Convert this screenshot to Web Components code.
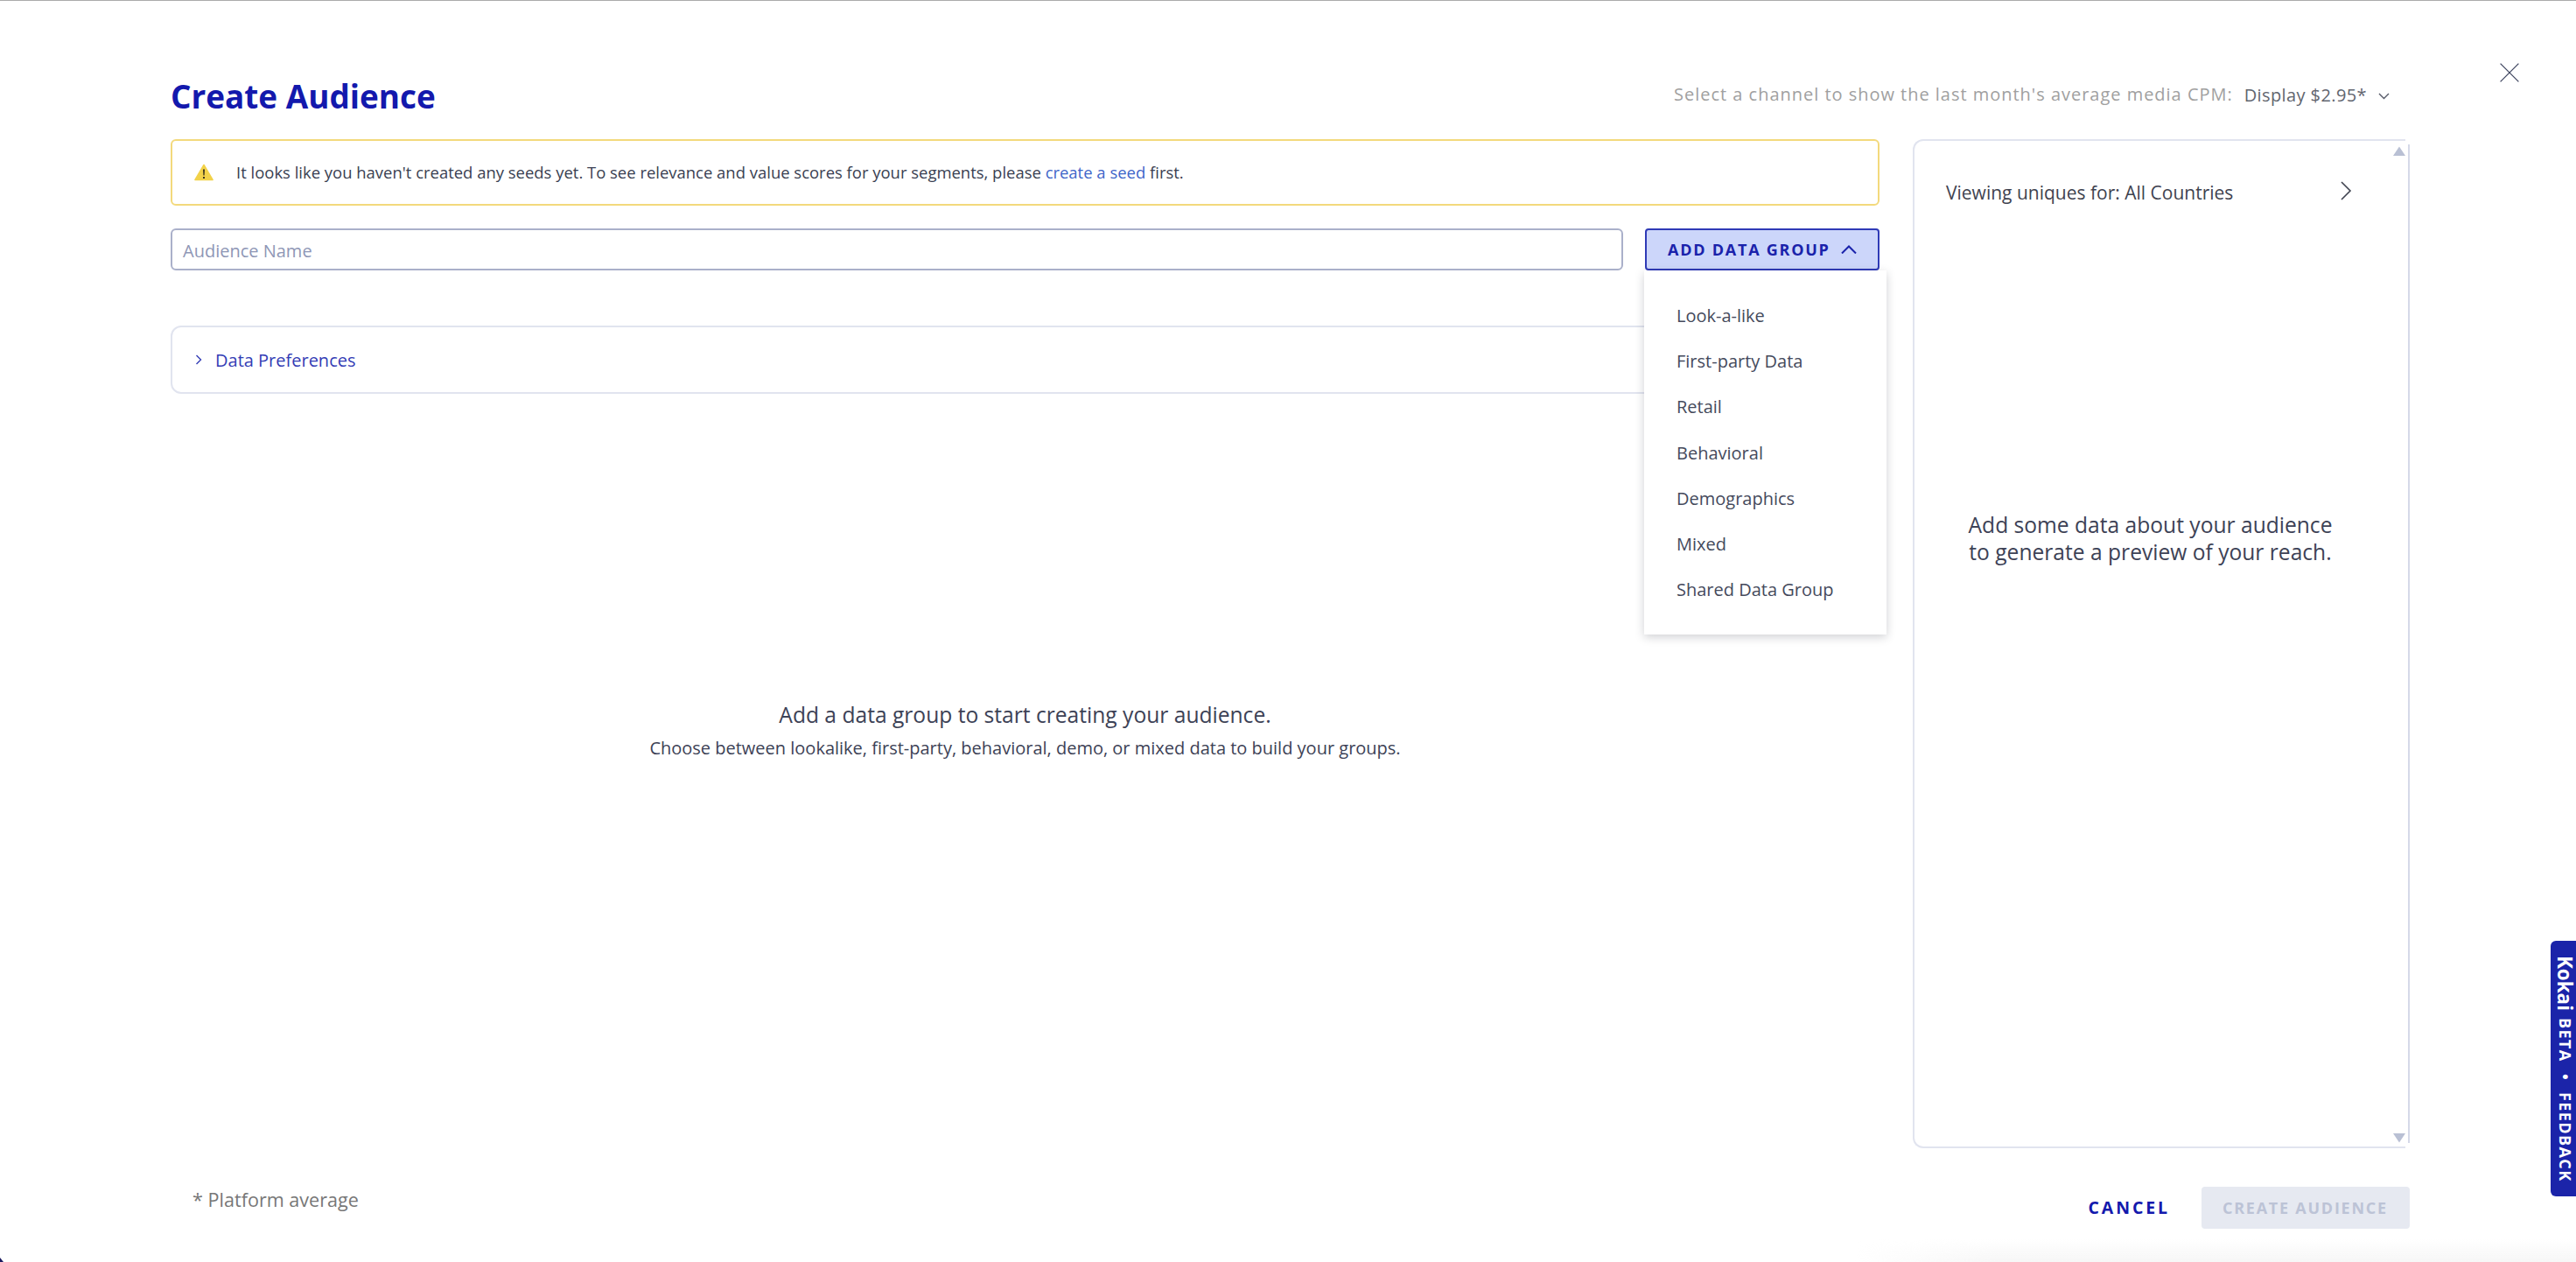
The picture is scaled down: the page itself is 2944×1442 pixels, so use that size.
<!DOCTYPE html>
<html>
<head>
<meta charset="utf-8">
<title>Create Audience</title>
<style>
    html, body { margin: 0; background: #fff; }
    body { font-family: "Open Sans", "Liberation Sans", sans-serif; color: #3a3f52; }
</style>
</head>
<body>
<audience-page>
    <audience-header slot="header" title-text="Create Audience" channel="Display $2.95*">Select a channel to show the last month's average media CPM:</audience-header>
    <alert-banner slot="main">It looks like you haven't created any seeds yet. To see relevance and value scores for your segments, please <a href="#">create a seed</a> first.</alert-banner>
    <name-row slot="main">
        <text-field slot="field">Audience Name</text-field>
        <data-group-button slot="action" label="ADD DATA GROUP">
            <menu-item>Look-a-like</menu-item>
            <menu-item>First-party Data</menu-item>
            <menu-item>Retail</menu-item>
            <menu-item>Behavioral</menu-item>
            <menu-item>Demographics</menu-item>
            <menu-item>Mixed</menu-item>
            <menu-item>Shared Data Group</menu-item>
        </data-group-button>
    </name-row>
    <collapse-card slot="main">Data Preferences</collapse-card>
    <empty-state slot="main" heading="Add a data group to start creating your audience.">Choose between lookalike, first-party, behavioral, demo, or mixed data to build your groups.</empty-state>
    <reach-panel slot="side" heading="Viewing uniques for: All Countries">Add some data about your audience<br>to generate a preview of your reach.</reach-panel>
    <audience-footer slot="footer" note="* Platform average"></audience-footer>
</audience-page>
<feedback-tab></feedback-tab>

<script>
class AudiencePage extends HTMLElement {
    constructor() {
        super();
        this.attachShadow({ mode: 'open' });
        this.shadowRoot.innerHTML = `
            <style>
                :host {
                    display: block;
                    box-sizing: border-box;
                    height: 1442px;
                    overflow: hidden;
                    position: relative;
                    border-top: 1px solid #ababab;
                    padding: 0 190px 0 195px;
                }
                .content {
                    display: grid;
                    grid-template-columns: 1953px 568px;
                    column-gap: 38px;
                    height: 1153px;
                }
                .main { display: flex; flex-direction: column; min-width: 0; }
                .close {
                    position: absolute;
                    left: 2857px;
                    top: 71px;
                    width: 22px;
                    height: 22px;
                }
                .fade {
                    position: absolute;
                    left: 2120px;
                    right: 0;
                    bottom: 0;
                    height: 26px;
                    background: linear-gradient(180deg, rgba(240,240,240,0), rgba(240,240,240,.55));
                    -webkit-mask-image: linear-gradient(90deg, transparent, #000 160px);
                }
                .corner {
                    position: absolute;
                    left: 0;
                    bottom: 0;
                    width: 4px;
                    height: 5px;
                    background: #1b1a5e;
                    clip-path: polygon(0 0, 100% 100%, 0 100%);
                }
            </style>
            <slot name="header"></slot>
            <div class="content">
                <div class="main"><slot name="main"></slot></div>
                <slot name="side"></slot>
            </div>
            <slot name="footer"></slot>
            <svg class="close" viewBox="0 0 22 22" fill="none" stroke="#3f4660" stroke-width="1.3">
                <path d="M.6.6l20.8 20.8M21.4.6L.6 21.4"/>
            </svg>
            <div class="fade"></div>
            <div class="corner"></div>
        `;
    }
}

class AudienceHeader extends HTMLElement {
    constructor() {
        super();
        this.attachShadow({ mode: 'open' });
        this.shadowRoot.innerHTML = `
            <style>
                :host {
                    display: flex;
                    justify-content: space-between;
                    align-items: flex-start;
                    height: 158px;
                    padding-right: 23px;
                }
                h1 {
                    margin: 84px 0 0;
                    font-size: 36.9px;
                    line-height: 50px;
                    font-weight: 700;
                    color: #1319ad;
                }
                .channel {
                    display: flex;
                    align-items: flex-start;
                    margin-top: 93px;
                    font-size: 20px;
                    line-height: 28px;
                    letter-spacing: .98px;
                    color: #a0a0a0;
                }
                .value {
                    margin: 1px 0 0 13px;
                    letter-spacing: .4px;
                    color: #62666f;
                }
                svg { width: 13px; height: 8px; margin: 12px 0 0 13px; }
            </style>
            <h1></h1>
            <div class="channel">
                <span><slot></slot></span>
                <span class="value"></span>
                <svg viewBox="0 0 13 8" fill="none" stroke="#565a68" stroke-width="1.4"><path d="M1 1l5.5 5.5L12 1"/></svg>
            </div>
        `;
    }

    connectedCallback() {
        this.shadowRoot.querySelector('h1').innerText = this.getAttribute('title-text');
        this.shadowRoot.querySelector('.value').innerText = this.getAttribute('channel');
    }
}

class AlertBanner extends HTMLElement {
    constructor() {
        super();
        this.attachShadow({ mode: 'open' });
        this.shadowRoot.innerHTML = `
            <style>
                :host {
                    display: flex;
                    align-items: center;
                    box-sizing: border-box;
                    height: 76px;
                    padding-left: 25px;
                    border: 2px solid #f3d97c;
                    border-radius: 6px;
                    font-size: 18.47px;
                    color: #3a3f52;
                }
                svg { width: 22px; height: 20px; margin-right: 26px; flex: none; }
                span { margin-bottom: 2px; }
                ::slotted(a) { color: #3f66c9; text-decoration: none; }
            </style>
            <svg viewBox="0 0 22 20">
                <path d="M11 1.5L21 18.5H1z" fill="#f2d24a" stroke="#f2d24a" stroke-width="1.6" stroke-linejoin="round"/>
                <path d="M10 6.5h2l-.4 7h-1.2zM10 15h2v2h-2z" fill="#3a3420"/>
            </svg>
            <span><slot></slot></span>
        `;
    }
}

class NameRow extends HTMLElement {
    constructor() {
        super();
        this.attachShadow({ mode: 'open' });
        this.shadowRoot.innerHTML = `
            <style>
                :host {
                    display: flex;
                    gap: 25px;
                    margin-top: 26px;
                    position: relative;
                    z-index: 2;
                }
            </style>
            <slot name="field"></slot>
            <slot name="action"></slot>
        `;
    }
}

class TextField extends HTMLElement {
    constructor() {
        super();
        this.attachShadow({ mode: 'open' });
        this.shadowRoot.innerHTML = `
            <style>
                :host {
                    display: flex;
                    align-items: center;
                    box-sizing: border-box;
                    width: 1660px;
                    height: 48px;
                    padding: 2px 0 0 12px;
                    border: 2px solid #aab0ca;
                    border-radius: 6px;
                    font-size: 20px;
                    color: #8f97b6;
                }
            </style>
            <slot></slot>
        `;
    }
}

class DataGroupButton extends HTMLElement {
    constructor() {
        super();
        this.attachShadow({ mode: 'open' });
        this.shadowRoot.innerHTML = `
            <style>
                :host { display: block; position: relative; }
                .button {
                    display: flex;
                    align-items: center;
                    box-sizing: border-box;
                    width: 268px;
                    height: 48px;
                    padding-left: 24px;
                    border: 2px solid #2f3ab6;
                    border-radius: 4px;
                    background: #ccd6fa;
                    color: #1a22ab;
                    font-size: 18px;
                    font-weight: 700;
                    letter-spacing: 1.75px;
                }
                .button svg { width: 18px; height: 10px; margin-left: 12px; }
                .menu {
                    position: absolute;
                    left: -1px;
                    top: 48px;
                    box-sizing: border-box;
                    width: 277px;
                    height: 416px;
                    padding: 25px 0;
                    background: #fff;
                    box-shadow: 0 3px 10px rgba(40, 44, 60, .22);
                }
            </style>
            <div class="button">
                <span class="label"></span>
                <svg viewBox="0 0 18 10" fill="none" stroke="#1a22ab" stroke-width="2"><path d="M1 9.5L9 1.5l8 8"/></svg>
            </div>
            <div class="menu"><slot></slot></div>
        `;
    }

    connectedCallback() {
        this.shadowRoot.querySelector('.label').innerText = this.getAttribute('label');
    }
}

class MenuItem extends HTMLElement {
    constructor() {
        super();
        this.attachShadow({ mode: 'open' });
        this.shadowRoot.innerHTML = `
            <style>
                :host {
                    display: flex;
                    align-items: center;
                    height: 52.3px;
                    padding-left: 37px;
                    font-size: 20px;
                    color: #454a5c;
                }
            </style>
            <slot></slot>
        `;
    }
}

class CollapseCard extends HTMLElement {
    constructor() {
        super();
        this.attachShadow({ mode: 'open' });
        this.shadowRoot.innerHTML = `
            <style>
                :host {
                    display: flex;
                    align-items: center;
                    box-sizing: border-box;
                    height: 78px;
                    margin-top: 63px;
                    padding-left: 26px;
                    border: 2px solid #e1e4ef;
                    border-radius: 12px;
                    font-size: 20px;
                    color: #343db5;
                }
                svg { width: 8px; height: 12px; margin-right: 15px; }
            </style>
            <svg viewBox="0 0 8 12" fill="none" stroke="#343db5" stroke-width="1.4"><path d="M1.5 1l5 5-5 5"/></svg>
            <slot></slot>
        `;
    }
}

class EmptyState extends HTMLElement {
    constructor() {
        super();
        this.attachShadow({ mode: 'open' });
        this.shadowRoot.innerHTML = `
            <style>
                :host {
                    display: block;
                    padding-top: 350px;
                    text-align: center;
                    color: #3d4256;
                }
                h2 {
                    margin: 0 0 7px;
                    font-size: 24.6px;
                    line-height: 34px;
                    font-weight: 400;
                }
                p { margin: 0; font-size: 20px; line-height: 28px; }
            </style>
            <h2></h2>
            <p><slot></slot></p>
        `;
    }

    connectedCallback() {
        this.shadowRoot.querySelector('h2').innerText = this.getAttribute('heading');
    }
}

class ReachPanel extends HTMLElement {
    constructor() {
        super();
        this.attachShadow({ mode: 'open' });
        this.shadowRoot.innerHTML = `
            <style>
                :host {
                    display: block;
                    box-sizing: border-box;
                    position: relative;
                    padding: 45px 63px 0 36px;
                    border: 2px solid #e1e4ef;
                    border-right-color: #d5d9e8;
                    border-radius: 12px 0 0 12px;
                }
                .head {
                    display: flex;
                    justify-content: space-between;
                    align-items: flex-start;
                    font-size: 21px;
                    line-height: 28px;
                    color: #3f4350;
                }
                .head svg { width: 14px; height: 22px; margin-top: 1px; margin-right: 1px; }
                .hint {
                    padding: 350px 0 0 2px;
                    text-align: center;
                    font-size: 24.6px;
                    line-height: 31px;
                    color: #3d4256;
                }
                .cover, .arrow { position: absolute; }
                .cover { right: -2px; width: 5px; height: 6px; background: #fff; }
                .cover.top { top: -2px; }
                .cover.bottom { bottom: -2px; }
                .arrow { right: 3px; width: 14px; height: 11px; fill: #b9c0d4; }
                .arrow.up { top: 6px; }
                .arrow.down { bottom: 4px; }
            </style>
            <div class="head">
                <span class="title"></span>
                <svg viewBox="0 0 14 22" fill="none" stroke="#3f4350" stroke-width="1.6"><path d="M2 1l10 10L2 21"/></svg>
            </div>
            <div class="hint"><slot></slot></div>
            <div class="cover top"></div>
            <div class="cover bottom"></div>
            <svg class="arrow up" viewBox="0 0 14 11"><path d="M7 .5L14 11H0z"/></svg>
            <svg class="arrow down" viewBox="0 0 14 11"><path d="M0 0h14L7 10.5z"/></svg>
        `;
    }

    connectedCallback() {
        this.shadowRoot.querySelector('.title').innerText = this.getAttribute('heading');
    }
}

class AudienceFooter extends HTMLElement {
    constructor() {
        super();
        this.attachShadow({ mode: 'open' });
        this.shadowRoot.innerHTML = `
            <style>
                :host {
                    display: flex;
                    align-items: flex-start;
                    padding: 44px 0 0 25px;
                }
                .note {
                    flex: 1;
                    font-size: 21.6px;
                    line-height: 30px;
                    color: #777;
                }
                .cancel, .create {
                    font-weight: 700;
                    line-height: 48px;
                }
                .cancel {
                    color: #1319ad;
                    font-size: 19.5px;
                    letter-spacing: 2.9px;
                    margin-right: 36px;
                }
                .create {
                    box-sizing: border-box;
                    width: 238px;
                    padding-left: 24px;
                    border-radius: 4px;
                    background: #e6e9f1;
                    color: #bcc3d6;
                    font-size: 18px;
                    letter-spacing: 1.75px;
                }
            </style>
            <div class="note"></div>
            <div class="cancel">CANCEL</div>
            <div class="create">CREATE AUDIENCE</div>
        `;
    }

    connectedCallback() {
        this.shadowRoot.querySelector('.note').innerText = this.getAttribute('note');
    }
}

class FeedbackTab extends HTMLElement {
    constructor() {
        super();
        this.attachShadow({ mode: 'open' });
        this.shadowRoot.innerHTML = `
            <style>
                :host {
                    position: absolute;
                    right: 0;
                    top: 1075px;
                    box-sizing: border-box;
                    width: 29px;
                    height: 292px;
                    padding: 17px 0 0 4px;
                    border-radius: 6px 0 0 6px;
                    background: #1b24a9;
                    color: #fff;
                    writing-mode: vertical-rl;
                    display: flex;
                    align-items: center;
                    font-weight: 700;
                    font-size: 18px;
                    letter-spacing: 1.4px;
                    white-space: nowrap;
                }
                .brand { font-size: 22.4px; letter-spacing: 0; margin-inline-end: 8px; }
                .dot { margin-inline: 13px; }
            </style>
            <span class="brand">Kokai</span>
            <span class="beta">BETA</span>
            <span class="dot">•</span>
            <span>FEEDBACK</span>
        `;
    }
}

customElements.define('audience-page', AudiencePage);
customElements.define('audience-header', AudienceHeader);
customElements.define('alert-banner', AlertBanner);
customElements.define('name-row', NameRow);
customElements.define('text-field', TextField);
customElements.define('data-group-button', DataGroupButton);
customElements.define('menu-item', MenuItem);
customElements.define('collapse-card', CollapseCard);
customElements.define('empty-state', EmptyState);
customElements.define('reach-panel', ReachPanel);
customElements.define('audience-footer', AudienceFooter);
customElements.define('feedback-tab', FeedbackTab);
</script>
</body>
</html>
